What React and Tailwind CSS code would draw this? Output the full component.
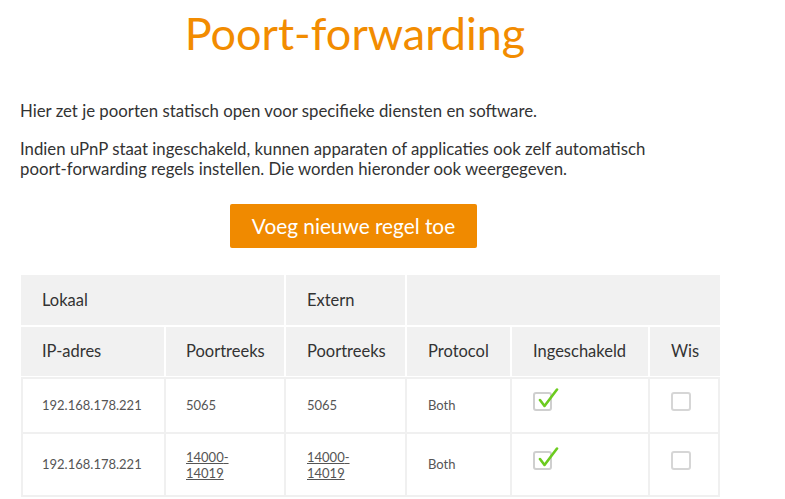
const cols = 'grid grid-cols-[143px_118px_119px_103px_136px_70px] gap-x-[2px]';

function CheckedBox() {
  return (
    <div className="relative mb-[9px] h-[19px] w-[19px] rounded-[3px] border-2 border-[#cfcfcf] bg-white">
      <svg
        className="absolute left-[2px] top-[-6px]"
        width="22"
        height="22"
        viewBox="0 0 22 22"
      >
        <path
          d="M3 12 L7.5 18 L20 1.5"
          fill="none"
          stroke="#6ccb1f"
          strokeWidth="2.6"
          strokeLinecap="round"
          strokeLinejoin="round"
        />
      </svg>
    </div>
  );
}

function EmptyBox() {
  return <div className="mb-[8px] h-[19px] w-[20px] rounded-[3px] border-2 border-[#d6d6d6] bg-white" />;
}

const rows = [
  { ip: '192.168.178.221', local: '5065', ext: '5065', proto: 'Both', h: 'h-[53px]', range: false },
  { ip: '192.168.178.221', local: '14000-14019', ext: '14000-14019', proto: 'Both', h: 'h-[61px]', range: true },
];

function Range({ value, range }) {
  if (!range) return <span>{value}</span>;
  const [a, b] = value.split('-');
  return (
    <a href="#" className="underline leading-[16px] text-[#555]">
      {a}-<br />
      {b}
    </a>
  );
}

export default function App() {
  return (
    <div className="min-h-screen bg-white font-['Lato',sans-serif] text-[#333]">
      {/* Page title */}
      <h1 className="ml-[20px] w-[670px] pt-[7px] text-center text-[45px] font-normal leading-[52px] text-[#f28c00]">
        Poort-forwarding
      </h1>

      {/* Intro text */}
      <div className="ml-[20px] mt-[42px] text-[16.8px] leading-[20px] text-[#333]">
        <p>Hier zet je poorten statisch open voor specifieke diensten en software.</p>
        <p className="mt-[18px]">
          Indien uPnP staat ingeschakeld, kunnen apparaten of applicaties ook zelf automatisch
          <br />
          poort-forwarding regels instellen. Die worden hieronder ook weergegeven.
        </p>
      </div>

      {/* Add button */}
      <div className="ml-[20px] mt-[25px] flex w-[667px] justify-center">
        <button className="h-[44px] rounded-[2px] bg-[#f08a00] px-[22px] text-[20.8px] text-white">
          Voeg nieuwe regel toe
        </button>
      </div>

      {/* Table */}
      <div className="ml-[21px] mt-[27px] w-[699px]">
        <div className={`${cols} gap-y-[2px] text-[16.5px] text-[#333]`}>
          <div className="col-span-2 flex h-[50px] items-center bg-[#f1f1f1] pl-[21px]">Lokaal</div>
          <div className="flex h-[50px] items-center bg-[#f1f1f1] pl-[21px]">Extern</div>
          <div className="col-span-3 h-[50px] bg-[#f1f1f1]" />
          <div className="flex h-[49px] items-center bg-[#f1f1f1] pl-[21px]">IP-adres</div>
          <div className="flex h-[49px] items-center bg-[#f1f1f1] pl-[20px]">Poortreeks</div>
          <div className="flex h-[49px] items-center bg-[#f1f1f1] pl-[21px]">Poortreeks</div>
          <div className="flex h-[49px] items-center bg-[#f1f1f1] pl-[21px]">Protocol</div>
          <div className="flex h-[49px] items-center bg-[#f1f1f1] pl-[21px]">Ingeschakeld</div>
          <div className="flex h-[49px] items-center bg-[#f1f1f1] pl-[21px]">Wis</div>
        </div>

        <div className="mt-[1px] grid grid-cols-[141px_118px_119px_103px_136px_68px] gap-[2px] bg-[#f0f0f0] p-[2px] text-[13px] text-[#555]">
          {rows.map((r, i) => (
            <div key={i} className="contents">
              <div className={`flex ${r.h} items-center bg-white pl-[19px]`}>{r.ip}</div>
              <div className={`flex ${r.h} items-center bg-white pl-[20px]`}>
                <Range value={r.local} range={r.range} />
              </div>
              <div className={`flex ${r.h} items-center bg-white pl-[21px]`}>
                <Range value={r.ext} range={r.range} />
              </div>
              <div className={`flex ${r.h} items-center bg-white pl-[21px]`}>{r.proto}</div>
              <div className={`flex ${r.h} items-center bg-white pl-[21px]`}>
                <CheckedBox />
              </div>
              <div className={`flex ${r.h} items-center bg-white pl-[21px]`}>
                <EmptyBox />
              </div>
            </div>
          ))}
        </div>
      </div>
    </div>
  );
}
